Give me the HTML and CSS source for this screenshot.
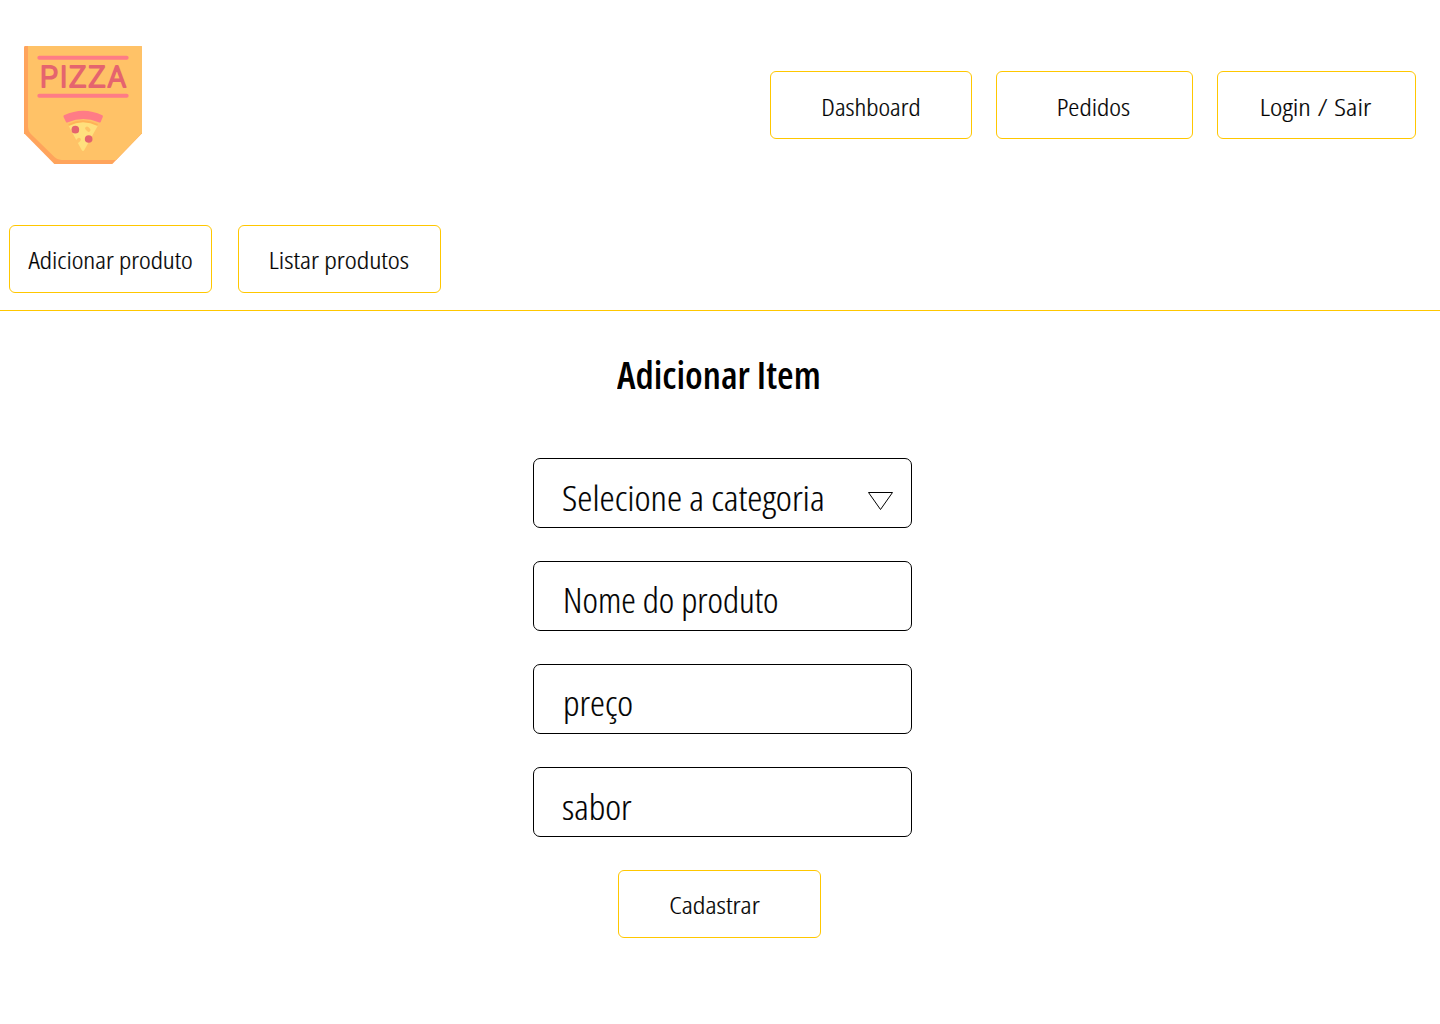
FILE: index.html
```html
<!DOCTYPE html>
<html lang="pt-BR">
<head>
  <meta charset="utf-8">
  <title>Adicionar Item</title>
  <link rel="stylesheet" href="styles.css">
</head>
<body>
  <header class="header">
    <svg class="logo" viewBox="0 0 354 354" role="img" aria-label="Pizza">
      <path fill="#ffa45c" d="M4 0H350Q354 0 354 4V262L265 354H91L0 262V4Q0 0 4 0Z"/>
      <path fill="#ffc267" d="M12 0H350Q354 0 354 4V262L276 342H112Q100 342 92 334L20 263Q12 255 12 243Z"/>
      <path stroke="#ff7c86" stroke-width="12" stroke-linecap="round" d="M46 35H308M46 149H308"/>
      <text class="logo-text" x="48 107 135 193 251" y="123">PIZZA</text>
      <path fill="#ffb357" d="M133 234Q177 212 222 234L216 246Q177 226 138 246Z"/>
      <path fill="#ffe07d" d="M134 240Q177 218 221 240L181 312Q177 318 173 312Z"/>
      <path fill="#ff7c86" d="M120 208Q178 181 235 208Q238 210 236 214L230 228Q228 231 224 229Q178 209 132 229Q128 231 126 228L119 214Q117 210 120 208Z"/>
      <circle fill="#e5646e" cx="154" cy="251" r="11.500"/>
      <circle fill="#e5646e" cx="194" cy="279" r="11.500"/>
      <path stroke="#ffc267" stroke-width="11" stroke-linecap="round" d="M189 247L194 252M161 285L165 281"/>
    </svg>
    <nav class="nav">
      <a class="button dashboard"><span class="label">Dashboard</span></a>
      <a class="button orders"><span class="label">Pedidos</span></a>
      <a class="button login"><span class="label">Login / Sair</span></a>
    </nav>
  </header>
  <nav class="subnav">
    <a class="button add"><span class="label">Adicionar produto</span></a>
    <a class="button list"><span class="label">Listar produtos</span></a>
  </nav>
  <main class="main">
    <h1 class="title">Adicionar Item</h1>
    <form class="form">
      <div class="field category">
        <span class="label">Selecione a categoria</span>
        <svg class="arrow" viewBox="0 0 26 19"><path fill="none" stroke="#000" d="M.5 .5H24.500L12.500 17.500Z"/></svg>
      </div>
      <div class="field name"><span class="label">Nome do produto</span></div>
      <div class="field price"><span class="label">preço</span></div>
      <div class="field flavor"><span class="label">sabor</span></div>
      <a class="button submit"><span class="label">Cadastrar</span></a>
    </form>
  </main>
</body>
</html>
```
FILE: styles.css
```css
* {
  box-sizing: border-box;
}

body {
  margin: 0;
  background: #fff;
  color: #000;
  font-family: "Open Sans", sans-serif;
  font-weight: 300;
  font-stretch: 75%;
}

.header {
  display: flex;
  justify-content: space-between;
  align-items: center;
  height: 210px;
  padding: 0 24px;
}

.logo {
  width: 118px;
  height: 118px;
}

.logo-text {
  font-family: Roboto, sans-serif;
  font-size: 87px;
  font-weight: 300;
  font-stretch: 100%;
  fill: #e5646e;
  stroke: #e5646e;
  stroke-width: 6px;
  stroke-linejoin: round;
}

.nav {
  display: flex;
  gap: 24px;
}

.button {
  display: flex;
  align-items: center;
  justify-content: center;
  width: 203px;
  height: 68px;
  border: 1px solid #ffc700;
  border-radius: 6px;
  font-size: 24px;
  white-space: nowrap;
}

.label {
  -webkit-text-stroke: 0.2px #000;
}

.nav .button {
  padding-top: 3px;
}

.nav .dashboard {
  width: 202px;
}

.dashboard .label {
  transform: scaleX(1.155);
}

.nav .orders {
  width: 197px;
  padding-right: 2px;
}

.orders .label {
  transform: scaleX(1.165);
}

.nav .login {
  width: 199px;
  padding-right: 3px;
}

.login .label {
  word-spacing: 1px;
  transform: scaleX(1.225);
}

.subnav {
  display: flex;
  gap: 26px;
  height: 101px;
  padding: 15px 9px 0;
  border-bottom: 1px solid #ffc700;
}

.add .label {
  transform: scaleX(1.163);
}

.list {
  padding-right: 2px;
}

.list .label {
  transform: scaleX(1.19);
}

.main {
  display: flex;
  flex-direction: column;
  align-items: center;
}

.title {
  height: 108px;
  margin: 39px 0 0;
  padding-right: 2px;
  font-size: 37px;
  font-weight: 600;
  line-height: 50px;
  transform: scaleX(1.03);
}

.form {
  display: flex;
  flex-direction: column;
  gap: 33px;
  padding-left: 5px;
}

.field {
  display: flex;
  align-items: center;
  justify-content: space-between;
  width: 379px;
  height: 70px;
  padding: 7px 17px 0 28px;
  border: 1px solid #000;
  border-radius: 7px;
  font-size: 34px;
  white-space: nowrap;
}

.field .label {
  transform: scaleX(1.11);
  transform-origin: left;
}

.category,
.flavor {
  padding-top: 9px;
}

.category .label {
  transform: scaleX(1.13);
}

.name,
.price {
  padding-left: 29px;
}

.name .label {
  transform: scaleX(1.083);
}

.arrow {
  width: 26px;
  height: 19px;
  margin-top: 7px;
}

.submit {
  margin-left: 85px;
  padding-right: 10px;
}

.submit .label {
  transform: scaleX(1.205);
}
```
